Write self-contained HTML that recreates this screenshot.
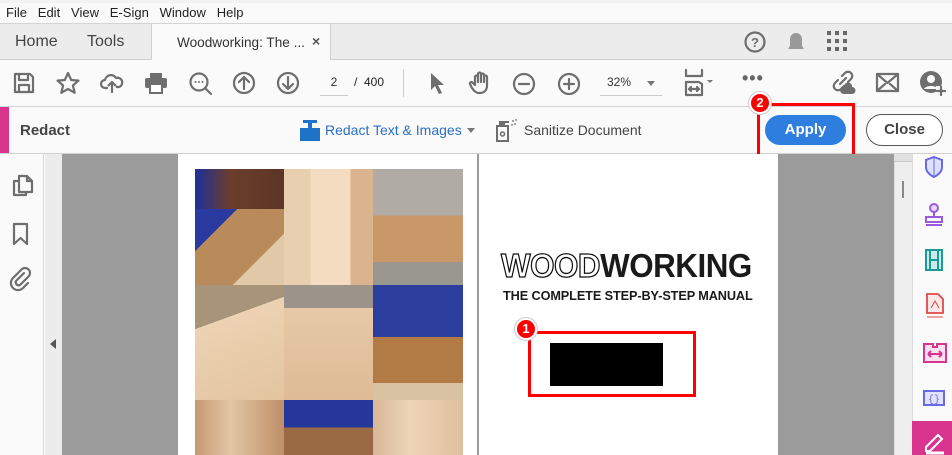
<!DOCTYPE html>
<html><head><meta charset="utf-8"><style>
*{margin:0;padding:0;box-sizing:border-box}
body{width:952px;height:455px;overflow:hidden;position:relative;font-family:"Liberation Sans",sans-serif;background:#fff;color:#333}
.a{position:absolute}
svg{position:absolute;overflow:visible}
.ic{fill:none;stroke:#6e6e6e;stroke-width:2.2;stroke-linecap:round;stroke-linejoin:round}
</style></head><body>
<div class="a" style="left:0;top:0;width:952px;height:24px;background:#fafafa;border-top:3px solid #f3f3f6"></div>
<div class="a" style="left:6px;top:5px;font-size:13px;color:#222;word-spacing:0">File&nbsp;&nbsp;&nbsp;Edit&nbsp;&nbsp;&nbsp;View&nbsp;&nbsp;&nbsp;E-Sign&nbsp;&nbsp;&nbsp;Window&nbsp;&nbsp;&nbsp;Help</div>
<div class="a" style="left:0;top:23px;width:952px;height:37px;background:#ececec;border-top:1px solid #d4d4d4;border-bottom:1px solid #d0d0d0"></div>
<div class="a" style="left:15px;top:33px;font-size:16px;color:#444">Home</div>
<div class="a" style="left:87px;top:33px;font-size:16px;color:#444">Tools</div>
<div class="a" style="left:151px;top:23px;width:180px;height:38px;background:#fafafa;border-left:1px solid #d0d0d0;border-right:1px solid #d0d0d0;border-top:1px solid #d4d4d4"></div>
<div class="a" style="left:177px;top:35px;font-size:13.6px;color:#333">Woodworking: The ...</div>
<div class="a" style="left:312px;top:33px;font-size:14px;color:#555;font-weight:bold">×</div>
<svg style="left:744px;top:31px" width="22" height="22"><circle cx="11" cy="11" r="9.5" class="ic"/><text x="11" y="16" font-size="13" text-anchor="middle" fill="#6e6e6e" font-weight="bold" font-family="Liberation Sans">?</text></svg>
<svg style="left:786px;top:31px" width="20" height="22"><path d="M10 2c-4 0-6 3-6 7v6l-2 3h16l-2-3V9c0-4-2-7-6-7z M8 19h4" fill="#999"/></svg>
<svg style="left:827px;top:31px" width="20" height="20" fill="#666"><rect x="0" y="0" width="4" height="4"/><rect x="8" y="0" width="4" height="4"/><rect x="16" y="0" width="4" height="4"/><rect x="0" y="8" width="4" height="4"/><rect x="8" y="8" width="4" height="4"/><rect x="16" y="8" width="4" height="4"/><rect x="0" y="16" width="4" height="4"/><rect x="8" y="16" width="4" height="4"/><rect x="16" y="16" width="4" height="4"/></svg>
<div class="a" style="left:0;top:60px;width:952px;height:47px;background:#fafafa;border-bottom:1px solid #d4d4d4"></div>
<svg style="left:14px;top:73px" width="20" height="20"><path d="M1 1h15l3 3v15H1z M5 1v6h9V1 M5 19v-7h10v7" class="ic"/></svg>
<svg style="left:56px;top:72px" width="24" height="22"><path d="M12 1l3.2 7 7.3.6-5.6 4.9 1.8 7.3L12 17l-6.7 3.8 1.8-7.3L1.5 8.6 8.8 8z" class="ic"/></svg>
<svg style="left:100px;top:72px" width="24" height="22"><path d="M7 16H5a4 4 0 010-8 6 6 0 0111-2 4.5 4.5 0 013 9h-2 M12 20v-10 M8.5 13.5L12 10l3.5 3.5" class="ic"/></svg>
<svg style="left:144px;top:72px" width="24" height="22"><path d="M6 1h12v5H6z" fill="#6e6e6e"/><rect x="1" y="6" width="22" height="10" rx="2" fill="#6e6e6e"/><rect x="6" y="12" width="12" height="9" fill="#fff" stroke="#6e6e6e" stroke-width="2"/></svg>
<svg style="left:189px;top:72px" width="24" height="24"><circle cx="10" cy="10" r="8.5" class="ic"/><path d="M16 16l6 6" class="ic" stroke-width="3"/><circle cx="6.5" cy="10" r="1" fill="#6e6e6e"/><circle cx="10" cy="10" r="1" fill="#6e6e6e"/><circle cx="13.5" cy="10" r="1" fill="#6e6e6e"/></svg>
<svg style="left:233px;top:72px" width="22" height="22"><circle cx="11" cy="11" r="10" class="ic"/><path d="M11 17V5 M6 10l5-5 5 5" class="ic"/></svg>
<svg style="left:277px;top:72px" width="22" height="22"><circle cx="11" cy="11" r="10" class="ic"/><path d="M11 5v12 M6 12l5 5 5-5" class="ic"/></svg>
<div class="a" style="left:320px;top:75px;width:28px;height:21px;border-bottom:1px solid #ccc;text-align:center;font-size:12px;color:#333">2</div>
<div class="a" style="left:354px;top:75px;font-size:12px;color:#222">/&nbsp;&nbsp;400</div>
<div class="a" style="left:403px;top:69px;width:1px;height:28px;background:#ccc"></div>
<svg style="left:430px;top:72px" width="16" height="22"><path d="M1 1l13 12h-6l4 8-3 1-4-8-4 4z" fill="#6e6e6e"/></svg>
<svg style="left:469px;top:71px" width="24" height="24"><path d="M6 14V6a1.5 1.5 0 013 0v5V3a1.5 1.5 0 013 0v8V4a1.5 1.5 0 013 0v7V6a1.5 1.5 0 013 0v9c0 4-3 7-7 7h-1c-3 0-5-2-7-5l-2-4a1.5 1.5 0 012.5-1.5z" class="ic" stroke-width="1.8"/></svg>
<svg style="left:513px;top:73px" width="22" height="22"><circle cx="11" cy="11" r="10" class="ic"/><path d="M6 11h10" class="ic"/></svg>
<svg style="left:558px;top:73px" width="22" height="22"><circle cx="11" cy="11" r="10" class="ic"/><path d="M6 11h10 M11 6v10" class="ic"/></svg>
<div class="a" style="left:600px;top:75px;width:62px;height:21px;border-bottom:1px solid #ccc;font-size:12px;color:#333;padding-left:7px">32%</div>
<div class="a" style="left:647px;top:81px;width:0;height:0;border-left:4px solid transparent;border-right:4px solid transparent;border-top:5px solid #777"></div>
<svg style="left:685px;top:70px" width="32" height="26"><path d="M1 0v6h16V0 M1 12v13h16V14l-3-2z M4 19h10 M4 19l2-2 M4 19l2 2 M14 19l-2-2 M14 19l-2 2" class="ic" stroke-width="1.8"/><path d="M22 10l3 3 3-3z" fill="#777"/></svg>
<div class="a" style="left:742px;top:68px;font-size:18px;color:#666;font-weight:bold;letter-spacing:1px">•••</div>
<svg style="left:830px;top:70px" width="26" height="26"><path d="M10 14l6-6 M8 10l-3 3a4 4 0 006 6l3-3 M12 6l3-3a4 4 0 016 6l-3 3" class="ic"/><path d="M14 24a4 4 0 010-8 4 4 0 018 1 3 3 0 010 7z" fill="#6e6e6e"/></svg>
<svg style="left:876px;top:73px" width="23" height="19"><rect x="1" y="1" width="21" height="17" class="ic" stroke-width="1.8"/><path d="M1 1l10.5 9L22 1 M1 18l8-7 M22 18l-8-7" class="ic" stroke-width="1.8"/></svg>
<svg style="left:919px;top:70px" width="28" height="28"><circle cx="12" cy="12" r="11" fill="#6e6e6e"/><circle cx="12" cy="9" r="4" fill="#fafafa"/><path d="M5 19c2-4 12-4 14 0" fill="#fafafa"/><rect x="17" y="16" width="10" height="10" fill="#fafafa"/><path d="M22 17v8 M18 21h8" class="ic" stroke-width="2"/></svg>
<div class="a" style="left:0;top:107px;width:952px;height:47px;background:#fafafa;border-bottom:1px solid #d0d0d0"></div>
<div class="a" style="left:0;top:107px;width:9px;height:46px;background:#d8348e"></div>
<div class="a" style="left:20px;top:122px;font-size:15px;font-weight:bold;color:#444">Redact</div>
<svg style="left:300px;top:120px" width="20" height="21" fill="#1f73c6"><rect x="0" y="8" width="20" height="13"/><rect x="3" y="0" width="14" height="3"/><rect x="8" y="0" width="4" height="8"/></svg>
<div class="a" style="left:325px;top:122px;font-size:14px;color:#2a6fc7">Redact Text &amp; Images</div>
<div class="a" style="left:467px;top:128px;border-left:4px solid transparent;border-right:4px solid transparent;border-top:5px solid #777"></div>
<svg style="left:496px;top:118px" width="26" height="24"><rect x="1" y="8" width="11" height="15" fill="none" stroke="#6e6e6e" stroke-width="2"/><rect x="3" y="3" width="6" height="5" fill="#6e6e6e"/><path d="M9 4h4" stroke="#6e6e6e" stroke-width="2"/><circle cx="6.5" cy="16" r="2" fill="none" stroke="#6e6e6e" stroke-width="1.5"/><circle cx="17" cy="3" r="1" fill="#888"/><circle cx="19" cy="6" r="1" fill="#888"/><circle cx="16" cy="7" r="1" fill="#888"/><circle cx="20" cy="2" r="1" fill="#888"/></svg>
<div class="a" style="left:524px;top:122px;font-size:14px;color:#444">Sanitize Document</div>
<div class="a" style="left:765px;top:115px;width:81px;height:30px;border-radius:15px;background:#2e7ee0;color:#fff;font-weight:bold;font-size:15px;text-align:center;line-height:30px">Apply</div>
<div class="a" style="left:757px;top:103px;width:98px;height:55px;border:3px solid #f00"></div>
<div class="a" style="left:749px;top:92px;width:22px;height:22px;border-radius:11px;background:#f00;border:2px solid #fff;box-shadow:0 0 0 1px #ccc;color:#fff;font-weight:bold;font-size:13px;text-align:center;line-height:18px">2</div>
<div class="a" style="left:866px;top:114px;width:77px;height:32px;border-radius:16px;border:1.5px solid #555;background:#fff;color:#444;font-weight:bold;font-size:15px;text-align:center;line-height:29px">Close</div>
<div class="a" style="left:0;top:154px;width:44px;height:301px;background:#fafafa;border-right:1px solid #d8d8d8"></div>
<svg style="left:12px;top:175px" width="22" height="22"><path d="M7 1h8l5 5v11H7z M15 1v5h5 M7 6H2v14h12v-3" class="ic" stroke-width="1.8"/></svg>
<svg style="left:13px;top:223px" width="16" height="23"><path d="M1 1h13v20l-6.5-6L1 21z" class="ic" stroke-width="1.8"/></svg>
<svg style="left:10px;top:268px" width="22" height="22"><path d="M14 5l-8 8a3 3 0 004 4l9-9a5 5 0 00-7-7L3 10a7 7 0 0010 10l5-5" class="ic" stroke-width="1.8"/></svg>
<div class="a" style="left:45px;top:154px;width:17px;height:301px;background:#ececec"></div>
<div class="a" style="left:50px;top:339px;border-top:5px solid transparent;border-bottom:5px solid transparent;border-right:6px solid #555"></div>
<div class="a" style="left:62px;top:154px;width:832px;height:301px;background:#9b9b9b"></div>
<div class="a" style="left:178px;top:154px;width:299px;height:301px;background:#fff"></div>
<div class="a" style="left:479px;top:154px;width:299px;height:301px;background:#fff"></div>
<div class="a" style="left:195px;top:169px;width:89px;height:116px;background:linear-gradient(135deg,#2a3aa0 0 40%,#b98a5a 40% 75%,#e0c8a8 75%)"></div>
<div class="a" style="left:195px;top:169px;width:89px;height:40px;background:linear-gradient(90deg,#1f2f9a,#6b3e2a 40%,#5b3528)"></div>
<div class="a" style="left:284px;top:169px;width:89px;height:116px;background:linear-gradient(90deg,#e8cfb0 0 30%,#f3dcc0 30% 75%,#d9b48e 75%)"></div>
<div class="a" style="left:373px;top:169px;width:90px;height:116px;background:linear-gradient(180deg,#b0aca5 0 40%,#c89868 40% 80%,#9a9690 80%)"></div>
<div class="a" style="left:195px;top:285px;width:89px;height:115px;background:linear-gradient(160deg,#a89478 0 30%,#ecd3b3 30%,#e3c49f)"></div>
<div class="a" style="left:284px;top:285px;width:89px;height:115px;background:linear-gradient(180deg,#9c948a 0 20%,#e6c9a6 20%,#dfbb97)"></div>
<div class="a" style="left:373px;top:285px;width:90px;height:115px;background:linear-gradient(180deg,#2b3e9e 0 45%,#b27a44 45% 85%,#d8c2a2 85%)"></div>
<div class="a" style="left:195px;top:400px;width:89px;height:55px;background:linear-gradient(90deg,#c79773,#e2c6a5 40%,#bf8f68)"></div>
<div class="a" style="left:284px;top:400px;width:89px;height:55px;background:linear-gradient(180deg,#253799 0 50%,#9a6a44 50%)"></div>
<div class="a" style="left:373px;top:400px;width:90px;height:55px;background:linear-gradient(90deg,#d8b896,#edd5b8 40%,#e0c09e)"></div>
<div class="a" style="left:501px;top:248px;font-size:33px;font-weight:bold;letter-spacing:-0.5px;line-height:36px;transform:scaleX(0.95);transform-origin:left"><span style="color:#fff;-webkit-text-stroke:1.3px #111">WOOD</span><span style="color:#1a1a1a">WORKING</span></div>
<div class="a" style="left:503px;top:289px;font-size:12.7px;font-weight:bold;color:#1a1a1a;letter-spacing:-0.1px">THE COMPLETE STEP-BY-STEP MANUAL</div>
<div class="a" style="left:528px;top:331px;width:168px;height:66px;border:3px solid #f00"></div>
<div class="a" style="left:550px;top:343px;width:113px;height:43px;background:#000"></div>
<div class="a" style="left:515px;top:318px;width:22px;height:22px;border-radius:11px;background:#f00;border:2px solid #fff;box-shadow:0 0 0 1px #ccc;color:#fff;font-weight:bold;font-size:13px;text-align:center;line-height:18px">1</div>
<div class="a" style="left:894px;top:154px;width:18px;height:301px;background:#eeeeee;border-left:1px solid #ddd"></div>
<div class="a" style="left:894px;top:154px;width:18px;height:8px;background:#e0e0e0;border-bottom:1px solid #ccc"></div>
<div class="a" style="left:902px;top:181px;width:2px;height:17px;background:#888"></div>
<div class="a" style="left:912px;top:154px;width:40px;height:301px;background:#fafafa;border-left:1px solid #ddd"></div>
<svg style="left:925px;top:156px" width="18" height="22"><path d="M9 1l8 3v7c0 5-4 8-8 10-4-2-8-5-8-10V4z" fill="#dde0ff" stroke="#6a6ae0" stroke-width="2"/><path d="M9 1v20" stroke="#6a6ae0" stroke-width="1"/></svg>
<svg style="left:924px;top:202px" width="20" height="24"><circle cx="10" cy="6" r="4" fill="#e6d8f8" stroke="#9a5ae0" stroke-width="2"/><path d="M10 10v5 M2 15h16v5H2z M2 23h16" stroke="#9a5ae0" stroke-width="2" fill="none"/></svg>
<svg style="left:925px;top:249px" width="18" height="22"><rect x="1" y="1" width="16" height="20" fill="#c8ecea" stroke="#1a9a96" stroke-width="2"/><path d="M5 1v20 M13 1v20 M5 11h8" stroke="#1a9a96" stroke-width="2"/></svg>
<svg style="left:926px;top:293px" width="18" height="25"><path d="M1 1h11l5 5v14H1z" fill="#fde8e8" stroke="#e04848" stroke-width="1.8"/><path d="M5 15l4-7 4 7" stroke="#e04848" stroke-width="1" fill="none"/><path d="M1 24h16" stroke="#e04848" stroke-width="1"/></svg>
<svg style="left:923px;top:343px" width="24" height="20"><path d="M1 1h9v3h4V1h9v18H1z" fill="#fbe0ef" stroke="#d8348e" stroke-width="2"/><path d="M5 11h14 M5 11l3-3 M5 11l3 3 M19 11l-3-3 M19 11l-3 3" stroke="#d8348e" stroke-width="2"/></svg>
<svg style="left:923px;top:390px" width="22" height="16"><rect x="1" y="1" width="20" height="14" fill="#e0e2ff" stroke="#6a6ae0" stroke-width="2"/><text x="11" y="12" font-size="10" text-anchor="middle" fill="#6a6ae0" font-family="Liberation Mono">{}</text></svg>
<div class="a" style="left:912px;top:421px;width:40px;height:34px;background:#d8348e"></div>
<svg style="left:923px;top:432px" width="24" height="22"><path d="M3 15L15 3l4 4L7 19H3z" fill="none" stroke="#fff" stroke-width="2"/><path d="M3 21h18" stroke="#fff" stroke-width="3"/></svg>
</body></html>
